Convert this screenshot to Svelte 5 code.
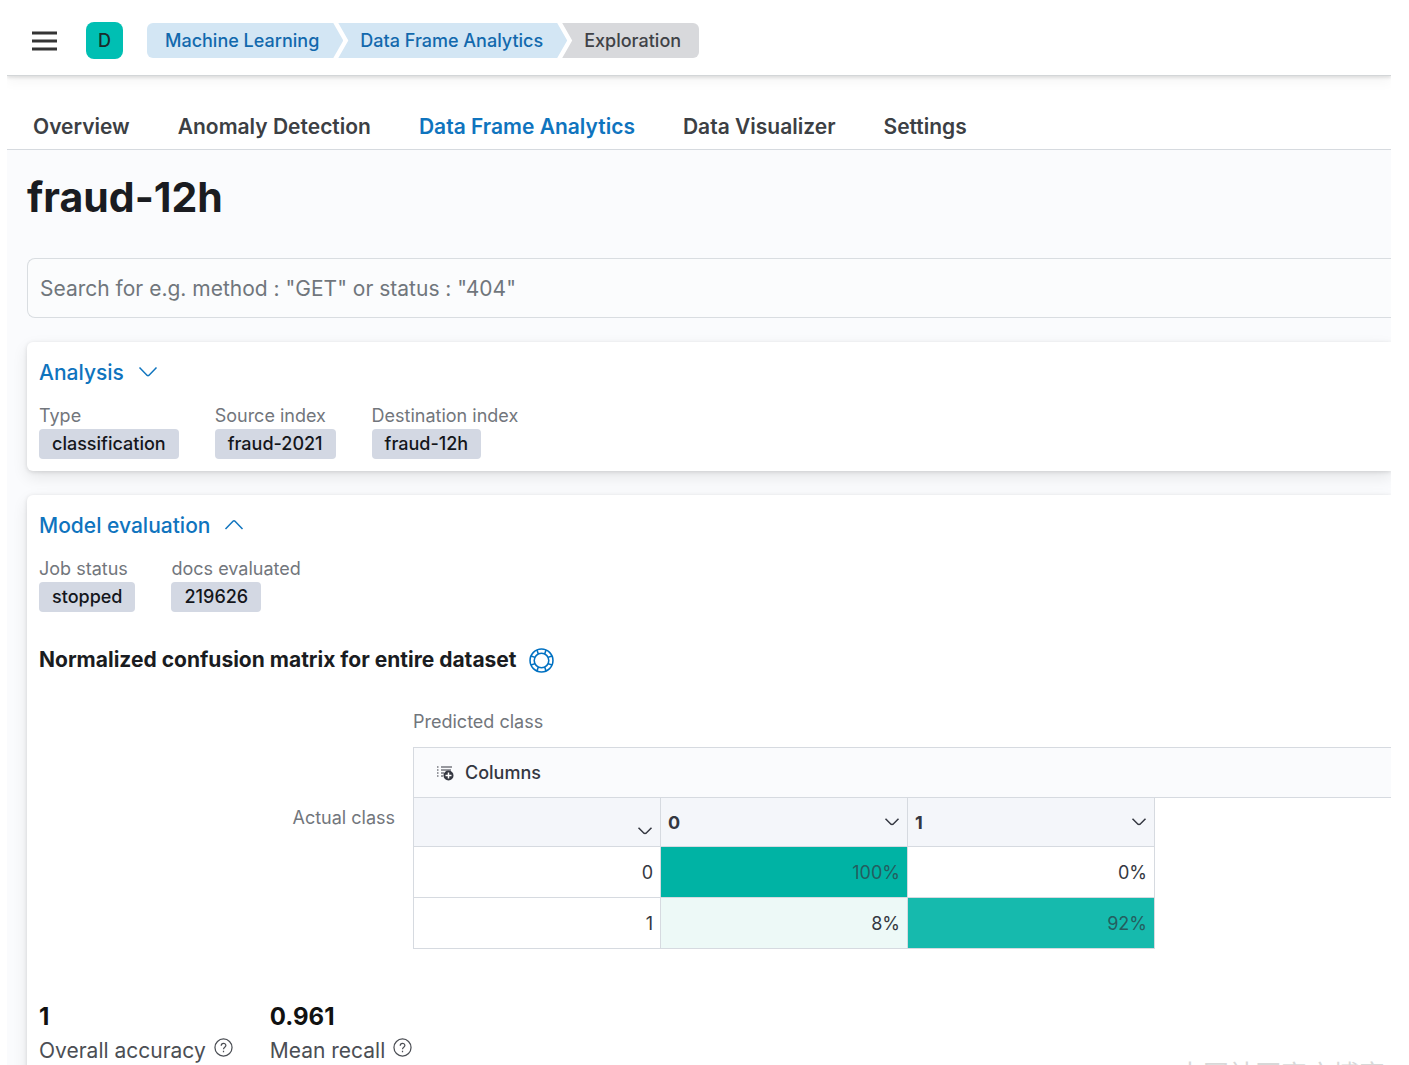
<script>
  const crumbs = ['Machine Learning', 'Data Frame Analytics', 'Exploration'];
  const tabs = ['Overview', 'Anomaly Detection', 'Data Frame Analytics', 'Data Visualizer', 'Settings'];
  const analysis = [
    { label: 'Type', value: 'classification' },
    { label: 'Source index', value: 'fraud-2021' },
    { label: 'Destination index', value: 'fraud-12h' }
  ];
  const evaluation = [
    { label: 'Job status', value: 'stopped' },
    { label: 'docs evaluated', value: '219626' }
  ];
  const rows = [
    { name: '0', cells: [{ text: '100%', tone: 'full' }, { text: '0%', tone: 'none' }] },
    { name: '1', cells: [{ text: '8%', tone: 'low' }, { text: '92%', tone: 'high' }] }
  ];
  const stats = [
    { value: '1', label: 'Overall accuracy' },
    { value: '0.961', label: 'Mean recall' }
  ];
</script>

{#snippet facts(items)}
  <dl class="facts">
    {#each items as item}
      <div>
        <dt>{item.label}</dt>
        <dd>{item.value}</dd>
      </div>
    {/each}
  </dl>
{/snippet}

{#snippet chevron()}
  <svg class="chevron" viewBox="0 0 16 10" aria-hidden="true"><path d="M1.5 1.8 6.5 6.8Q8 8 9.5 6.8L14.5 1.8" /></svg>
{/snippet}

<div class="app">
  <header class="top">
    <button class="menu" aria-label="Toggle navigation">
      <svg viewBox="0 0 25 20" aria-hidden="true"><path d="M0 2h25M0 10h25M0 18h25" /></svg>
    </button>
    <button class="space" aria-label="Space D">D</button>
    <nav class="crumbs" aria-label="Breadcrumb">
      {#each crumbs as crumb, i}
        {#if i < crumbs.length - 1}
          <a class="crumb" href="#{i}">{crumb}</a>
        {:else}
          <span class="crumb last" aria-current="page">{crumb}</span>
        {/if}
      {/each}
    </nav>
  </header>

  <nav class="tabs" aria-label="Machine Learning">
    {#each tabs as tab, i}
      <a href="#tab{i}" class:active={i === 2}>{tab}</a>
    {/each}
  </nav>

  <main>
    <h1>fraud-12h</h1>
    <input class="search" type="text" aria-label="Search" placeholder={'Search for e.g. method : "GET" or status : "404"'} />

    <section class="panel">
      <button class="toggle" aria-expanded="false">
        Analysis
        <svg viewBox="0 0 20 12" aria-hidden="true"><path d="M1.5 1.5 9.2 9.4Q10 10 10.8 9.4L18.5 1.5" /></svg>
      </button>
      {@render facts(analysis)}
    </section>

    <section class="panel evaluation">
      <button class="toggle" aria-expanded="true">
        Model evaluation
        <svg viewBox="0 0 20 12" aria-hidden="true"><path d="M1.5 10 9.2 2.1Q10 1.5 10.8 2.1L18.5 10" /></svg>
      </button>
      {@render facts(evaluation)}

      <div class="heading">
        <h2>Normalized confusion matrix for entire dataset</h2>
        <a href="#docs" aria-label="Documentation">
          <svg viewBox="0 0 24 24" aria-hidden="true">
            <circle cx="12" cy="12" r="11" />
            <circle cx="12" cy="12" r="7" />
            <path d="M7.6 2 9 5.700M16.400 2 15 5.700M7.600 22 9 18.300M16.400 22 15 18.300M2 7.600 5.700 9M2 16.400 5.700 15M22 7.600 18.300 9M22 16.400 18.300 15" />
          </svg>
        </a>
      </div>

      <div class="matrix">
        <div class="actual">Actual class</div>
        <div class="predicted">
          <div class="axis">Predicted class</div>
          <div class="toolbar">
            <button>
              <svg viewBox="0 0 17 16" aria-hidden="true">
                <path d="M0 2h1.500M0 5h1.500M0 8h1.500M0 11h1.500M4 2h11M4 5h10M4 8h3M4 11h2" />
                <circle cx="11.500" cy="10.500" r="5" />
                <path class="plus" d="M11.500 7.500v6M8.500 10.500h6" />
              </svg>
              Columns
            </button>
          </div>
          <table>
            <thead>
              <tr>
                <th class="corner"><button aria-label="Actual class column actions">{@render chevron()}</button></th>
                {#each ['0', '1'] as name}
                  <th><button><span>{name}</span>{@render chevron()}</button></th>
                {/each}
              </tr>
            </thead>
            <tbody>
              {#each rows as row}
                <tr>
                  <td>{row.name}</td>
                  {#each row.cells as cell}
                    <td class={cell.tone}>{cell.text}</td>
                  {/each}
                </tr>
              {/each}
            </tbody>
          </table>
        </div>
      </div>

      <div class="stats">
        {#each stats as stat}
          <div class="stat">
            <strong>{stat.value}</strong>
            <p>
              {stat.label}
              <svg viewBox="0 0 20 20" aria-hidden="true">
                <circle cx="10" cy="10" r="9" />
                <path d="M7.600 8.200C7.600 4.600 12.500 4.900 12.500 7.900 12.500 9.700 10 9.800 10 11.800M10 13.500V14.900" />
              </svg>
            </p>
          </div>
        {/each}
      </div>
    </section>
  </main>

  <div class="watermark">CSDN @Elastic 中国社区官方博客</div>
</div>

<style>
  :global(body) {
    background: #fff;
  }
  .app {
    position: relative;
    box-sizing: border-box;
    height: 100vh;
    overflow: hidden;
    display: flex;
    flex-direction: column;
    padding: 0 18px 0 7px;
    font-family: Inter, "Noto Sans CJK SC", sans-serif;
    font-size: 18px;
    color: #343741;
  }
  button {
    font: inherit;
    color: inherit;
    background: none;
    border: 0;
    padding: 0;
    cursor: pointer;
  }
  a {
    text-decoration: none;
    color: #0071c2;
  }
  svg {
    display: block;
    flex: none;
    fill: none;
    stroke: currentColor;
  }
  .top {
    flex: none;
    display: flex;
    align-items: center;
    height: 76px;
    padding: 6px 25px 0;
    box-sizing: border-box;
    border-bottom: 1px solid #d3d6d8;
    box-shadow: 0 2px 3px rgba(0, 0, 0, 0.1), 0 6px 12px rgba(0, 0, 0, 0.04);
    clip-path: inset(0 0 -30px 0);
  }
  .menu svg {
    width: 25px;
    height: 20px;
    stroke: #343434;
    stroke-width: 3;
  }
  .space {
    width: 37px;
    height: 37px;
    margin: 0 24px 0 29px;
    border-radius: 8px;
    background: #00bfb3;
    color: #1a2b2b;
    font-weight: 500;
  }
  .crumbs {
    display: flex;
  }
  .crumb {
    height: 35px;
    line-height: 35px;
    font-weight: 500;
    padding: 0 24px 0 22px;
    margin-left: -5px;
    background: #d3e6f4;
    color: #1269ad;
    clip-path: polygon(0 0, calc(100% - 10px) 0, 100% 50%, calc(100% - 10px) 100%, 0 100%, 10px 50%);
  }
  .crumb:first-child {
    margin-left: 0;
    padding-left: 18px;
    border-radius: 6px 0 0 6px;
    clip-path: polygon(0 0, calc(100% - 10px) 0, 100% 50%, calc(100% - 10px) 100%, 0 100%);
  }
  .crumb.last {
    padding-right: 18px;
    background: #d8d9dc;
    color: #404247;
    border-radius: 0 6px 6px 0;
    clip-path: polygon(0 0, 100% 0, 100% 100%, 0 100%, 10px 50%);
  }
  .tabs {
    flex: none;
    display: flex;
    gap: 48px;
    padding: 28px 26px 0;
    border-bottom: 1px solid #d6dadf;
  }
  .tabs a {
    height: 45px;
    line-height: 46px;
    font-size: 21px;
    font-weight: 600;
    color: #3c3f44;
  }
  .tabs a.active {
    color: #0f74be;
  }
  main {
    flex: auto;
    min-height: 0;
    overflow: hidden;
    background: #fafbfd;
    padding: 20px 0 0 20px;
  }
  h1 {
    margin: 0;
    font-size: 41px;
    line-height: 54px;
    font-weight: 700;
    color: #1a1c21;
  }
  .search {
    display: block;
    box-sizing: border-box;
    width: 100%;
    height: 60px;
    margin: 34px 0 24px;
    padding: 0 12px;
    border: 1px solid #d9dde1;
    border-right: 0;
    border-radius: 8px 0 0 8px;
    background: #fbfcfd;
    font: inherit;
    font-size: 21px;
  }
  .search::placeholder {
    color: #70767c;
    opacity: 1;
  }
  .panel {
    padding: 12px;
    background: #fff;
    border-radius: 6px 0 0 6px;
    box-shadow: 0 1px 4px rgba(0, 0, 0, 0.12), 0 6px 16px rgba(0, 0, 0, 0.09);
  }
  .evaluation {
    margin-top: 24px;
    position: relative;
  }
  .toggle {
    display: flex;
    align-items: center;
    gap: 14px;
    height: 36px;
    font-size: 21px;
    font-weight: 500;
    color: #0f74be;
  }
  .toggle svg {
    width: 20px;
    height: 12px;
    stroke-width: 1.500;
  }
  .facts {
    display: flex;
    gap: 36px;
    margin: 12px 0 0;
  }
  .facts dt {
    height: 27px;
    line-height: 27px;
    color: #72767c;
  }
  .facts dd {
    width: max-content;
    height: 30px;
    line-height: 30px;
    margin: 0;
    padding: 0 13px;
    border-radius: 4px;
    background: #d3d8e3;
    color: #14161b;
    font-weight: 500;
  }
  .heading {
    display: flex;
    align-items: center;
    gap: 12px;
    margin-top: 33px;
  }
  h2 {
    margin: 0;
    font-size: 21px;
    line-height: 30px;
    font-weight: 700;
    color: #1a1c21;
  }
  .heading svg {
    width: 25px;
    height: 25px;
    stroke-width: 1.500;
  }
  .matrix {
    display: flex;
    margin: 33px -12px 0 0;
  }
  .actual {
    box-sizing: border-box;
    width: 374px;
    padding: 96px 18px 0 0;
    line-height: 27px;
    text-align: right;
    color: #72767c;
  }
  .predicted {
    flex: 1;
    min-width: 0;
  }
  .axis {
    line-height: 27px;
    margin-bottom: 12px;
    color: #72767c;
  }
  .toolbar {
    height: 49px;
    display: flex;
    align-items: center;
    padding-left: 23px;
    border: 1px solid #d6dae0;
    border-right: 0;
    background: #fafbfd;
  }
  .toolbar button {
    display: flex;
    align-items: center;
    gap: 11px;
    font-weight: 500;
  }
  .toolbar svg {
    width: 17px;
    height: 16px;
  }
  .toolbar circle {
    fill: #343741;
    stroke: none;
  }
  .toolbar .plus {
    stroke: #fff;
    stroke-width: 1.500;
  }
  table {
    width: 742px;
    margin-top: -1px;
    table-layout: fixed;
    border-collapse: collapse;
  }
  th,
  td {
    box-sizing: border-box;
    height: 51px;
    padding: 0 7px;
    border: 1px solid #d6dae0;
    text-align: right;
  }
  thead th {
    height: 49px;
    background: #f4f6fa;
  }
  th button {
    display: flex;
    align-items: center;
    justify-content: space-between;
    width: 100%;
    font-weight: 700;
  }
  .corner button {
    justify-content: flex-end;
    padding-top: 18px;
  }
  .chevron {
    width: 16px;
    height: 10px;
    stroke-width: 1.500;
  }
  .full {
    background: #00b3a4;
    color: #245e5f;
  }
  .high {
    background: #16baad;
    color: #245e5f;
  }
  .low {
    background: #edf9f7;
  }
  .stats {
    display: flex;
    gap: 37px;
    margin-top: 52px;
  }
  .stat strong {
    display: block;
    font-size: 24px;
    line-height: 32px;
    color: #111;
  }
  .stat p {
    display: flex;
    gap: 8px;
    margin: 0;
    font-size: 21px;
    line-height: 36px;
    color: #4b4e54;
  }
  .stat svg {
    width: 19px;
    height: 19px;
    margin-top: 5px;
    stroke-width: 1.300;
  }
  .watermark {
    position: absolute;
    right: 24px;
    bottom: 0;
    height: 6px;
    font-family: "Liberation Sans", "Noto Sans CJK SC", sans-serif;
    font-size: 26px;
    line-height: 32px;
    color: #d8d8d8;
  }
</style>
